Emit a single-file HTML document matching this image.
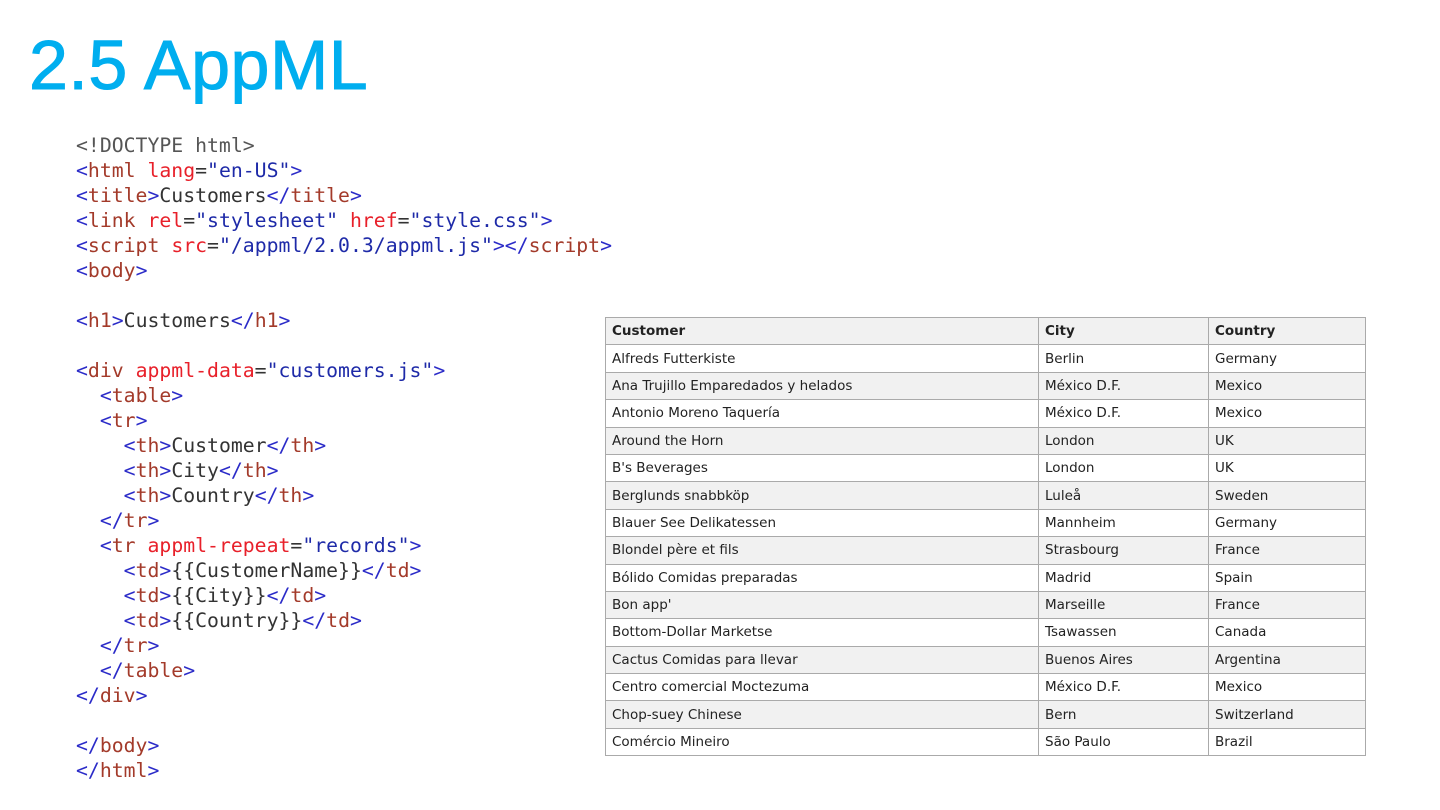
<!DOCTYPE html>
<html><head><meta charset="utf-8"><style>
body{margin:0;width:1440px;height:810px;background:#fff;position:relative;overflow:hidden}
h1{position:absolute;left:29px;top:25px;margin:0;font:70px "Liberation Sans",sans-serif;color:#00aeef;-webkit-text-stroke:1px #00aeef;letter-spacing:0.5px}
pre{position:absolute;left:76px;top:133px;margin:0;font:19.8px/25px "DejaVu Sans Mono","Liberation Mono",monospace;color:#333}
.b{color:#2b2bc8}.t{color:#a33a2a}.a{color:#e8202a}.v{color:#1e2aa8}.g{color:#555}
table{position:absolute;left:605px;top:317px;border-collapse:collapse;font:13.5px "DejaVu Sans",sans-serif;color:#222}
td,th{border:1px solid #aaa;height:26.4px;padding:0 6px;text-align:left;white-space:nowrap}
th{background:#f1f1f1;font-weight:bold}
tr:nth-child(odd) td{background:#f1f1f1}
</style></head><body>
<h1>2.5 AppML</h1>
<pre><span class="g">&lt;!DOCTYPE html&gt;</span>
<span class="b">&lt;</span><span class="t">html</span> <span class="a">lang</span>=<span class="v">"en-US"</span><span class="b">&gt;</span>
<span class="b">&lt;</span><span class="t">title</span><span class="b">&gt;</span>Customers<span class="b">&lt;/</span><span class="t">title</span><span class="b">&gt;</span>
<span class="b">&lt;</span><span class="t">link</span> <span class="a">rel</span>=<span class="v">"stylesheet"</span> <span class="a">href</span>=<span class="v">"style.css"</span><span class="b">&gt;</span>
<span class="b">&lt;</span><span class="t">script</span> <span class="a">src</span>=<span class="v">"/appml/2.0.3/appml.js"</span><span class="b">&gt;&lt;/</span><span class="t">script</span><span class="b">&gt;</span>
<span class="b">&lt;</span><span class="t">body</span><span class="b">&gt;</span>

<span class="b">&lt;</span><span class="t">h1</span><span class="b">&gt;</span>Customers<span class="b">&lt;/</span><span class="t">h1</span><span class="b">&gt;</span>

<span class="b">&lt;</span><span class="t">div</span> <span class="a">appml-data</span>=<span class="v">"customers.js"</span><span class="b">&gt;</span>
  <span class="b">&lt;</span><span class="t">table</span><span class="b">&gt;</span>
  <span class="b">&lt;</span><span class="t">tr</span><span class="b">&gt;</span>
    <span class="b">&lt;</span><span class="t">th</span><span class="b">&gt;</span>Customer<span class="b">&lt;/</span><span class="t">th</span><span class="b">&gt;</span>
    <span class="b">&lt;</span><span class="t">th</span><span class="b">&gt;</span>City<span class="b">&lt;/</span><span class="t">th</span><span class="b">&gt;</span>
    <span class="b">&lt;</span><span class="t">th</span><span class="b">&gt;</span>Country<span class="b">&lt;/</span><span class="t">th</span><span class="b">&gt;</span>
  <span class="b">&lt;/</span><span class="t">tr</span><span class="b">&gt;</span>
  <span class="b">&lt;</span><span class="t">tr</span> <span class="a">appml-repeat</span>=<span class="v">"records"</span><span class="b">&gt;</span>
    <span class="b">&lt;</span><span class="t">td</span><span class="b">&gt;</span>{{CustomerName}}<span class="b">&lt;/</span><span class="t">td</span><span class="b">&gt;</span>
    <span class="b">&lt;</span><span class="t">td</span><span class="b">&gt;</span>{{City}}<span class="b">&lt;/</span><span class="t">td</span><span class="b">&gt;</span>
    <span class="b">&lt;</span><span class="t">td</span><span class="b">&gt;</span>{{Country}}<span class="b">&lt;/</span><span class="t">td</span><span class="b">&gt;</span>
  <span class="b">&lt;/</span><span class="t">tr</span><span class="b">&gt;</span>
  <span class="b">&lt;/</span><span class="t">table</span><span class="b">&gt;</span>
<span class="b">&lt;/</span><span class="t">div</span><span class="b">&gt;</span>

<span class="b">&lt;/</span><span class="t">body</span><span class="b">&gt;</span>
<span class="b">&lt;/</span><span class="t">html</span><span class="b">&gt;</span></pre>
<table>
<colgroup><col style="width:433px"><col style="width:170px"><col style="width:157px"></colgroup>
<tr><th>Customer</th><th>City</th><th>Country</th></tr>
<tr><td>Alfreds Futterkiste</td><td>Berlin</td><td>Germany</td></tr>
<tr><td>Ana Trujillo Emparedados y helados</td><td>México D.F.</td><td>Mexico</td></tr>
<tr><td>Antonio Moreno Taquería</td><td>México D.F.</td><td>Mexico</td></tr>
<tr><td>Around the Horn</td><td>London</td><td>UK</td></tr>
<tr><td>B's Beverages</td><td>London</td><td>UK</td></tr>
<tr><td>Berglunds snabbköp</td><td>Luleå</td><td>Sweden</td></tr>
<tr><td>Blauer See Delikatessen</td><td>Mannheim</td><td>Germany</td></tr>
<tr><td>Blondel père et fils</td><td>Strasbourg</td><td>France</td></tr>
<tr><td>Bólido Comidas preparadas</td><td>Madrid</td><td>Spain</td></tr>
<tr><td>Bon app'</td><td>Marseille</td><td>France</td></tr>
<tr><td>Bottom-Dollar Marketse</td><td>Tsawassen</td><td>Canada</td></tr>
<tr><td>Cactus Comidas para llevar</td><td>Buenos Aires</td><td>Argentina</td></tr>
<tr><td>Centro comercial Moctezuma</td><td>México D.F.</td><td>Mexico</td></tr>
<tr><td>Chop-suey Chinese</td><td>Bern</td><td>Switzerland</td></tr>
<tr><td>Comércio Mineiro</td><td>São Paulo</td><td>Brazil</td></tr>
</table>
</body></html>
